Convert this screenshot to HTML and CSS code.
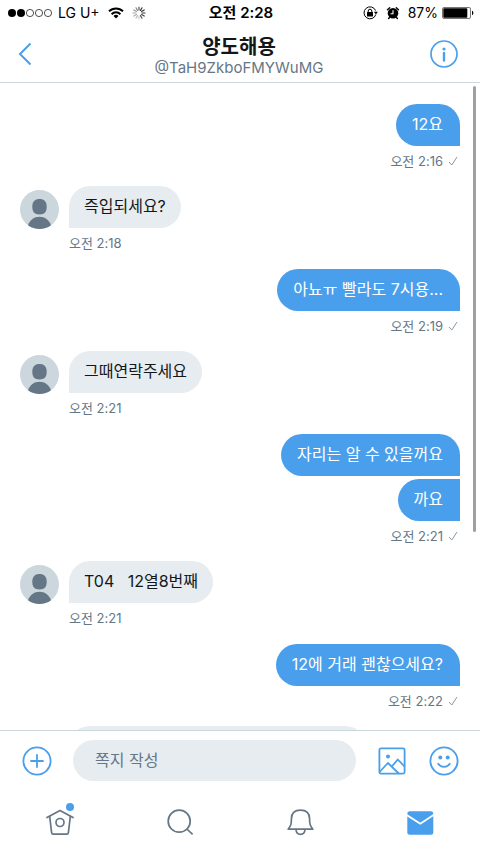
FILE: index.html
```
<!DOCTYPE html>
<html lang="ko">
<head>
<meta charset="utf-8">
<meta name="viewport" content="width=device-width, initial-scale=1">
<title>양도해용</title>
<link rel="stylesheet" href="styles.css">
</head>
<body>
<svg class="sprite" aria-hidden="true">
  <symbol id="avatar" viewBox="0 0 39 39">
    <circle cx="19.500" cy="19.500" r="19.500" fill="#ccd6dd"/>
    <path d="M19.500 9c4.500 0 7.200 2.500 7.200 7.500 0 5.200-1.800 8-7.200 8s-7.200-2.800-7.200-8c0-5 2.700-7.500 7.200-7.500z" fill="#657786"/>
    <path d="M8 35.200C10 30 14 26.800 19.500 26.800S29 30 31 35.200A19.500 19.500 0 0 1 8 35.200z" fill="#657786"/>
  </symbol>
  <symbol id="check" viewBox="0 0 10 10">
    <path d="M1 6l2.800 3L9 1" fill="none" stroke="#8899a6" stroke-width="1"/>
  </symbol>
</svg>

<div class="status">
  <div class="status-left">
    <svg width="44" height="10" viewBox="0 0 44 10" aria-hidden="true">
      <circle cx="4" cy="5" r="4"/><circle cx="13" cy="5" r="4"/>
      <g fill="none" stroke="#222" stroke-width=".8"><circle cx="22" cy="5" r="3.600"/><circle cx="31" cy="5" r="3.600"/><circle cx="40" cy="5" r="3.600"/></g>
    </svg>
    <span>LG U+</span>
    <svg class="wifi" width="16" height="12" viewBox="0 0 16 12" aria-hidden="true">
      <g fill="none" stroke="#000" stroke-width="2"><path d="M1 4.300a10 10 0 0 1 14 0"/><path d="M3.600 7.200a6.200 6.200 0 0 1 8.800 0"/></g>
      <path d="M8 11.600L5.500 9a3.600 3.600 0 0 1 5 0z"/>
    </svg>
    <svg class="spinner" width="14" height="14" viewBox="0 0 14 14" aria-hidden="true">
      <g stroke-width="1.200" stroke-linecap="round">
        <path d="M7 1v3" stroke="#555"/><path d="M10 1.800L8.500 4.400" stroke="#333"/><path d="M12.200 4L9.600 5.500" stroke="#333"/><path d="M13 7h-3" stroke="#333"/><path d="M12.200 10L9.600 8.500" stroke="#444"/><path d="M10 12.200L8.500 9.600" stroke="#555"/><path d="M7 13v-3" stroke="#ccc"/><path d="M4 12.200l1.500-2.600" stroke="#bbb"/><path d="M1.800 10l2.600-1.500" stroke="#aaa"/><path d="M1 7h3" stroke="#aaa"/><path d="M1.800 4l2.600 1.500" stroke="#999"/><path d="M4 1.800l1.500 2.600" stroke="#888"/>
      </g>
    </svg>
  </div>
  <time class="clock">오전 2:28</time>
  <div class="status-right">
    <svg width="15" height="14" viewBox="0 0 15 14" aria-hidden="true">
      <path d="M12.600 4.600A6 6 0 1 0 12.800 8.500" fill="none" stroke="#000" stroke-width="1"/>
      <path d="M10.900 5.800h4l-2 2.600z"/>
      <rect x="4" y="6" width="6" height="4.500" rx=".5"/>
      <path d="M5.200 6.500V5a1.800 1.800 0 0 1 3.600 0v1.500" fill="none" stroke="#000"/>
    </svg>
    <svg width="14" height="14" viewBox="0 0 14 14" aria-hidden="true">
      <circle cx="7" cy="7.300" r="5.300"/>
      <path d="M1.500 3.700l2.200-2M12.500 3.700l-2.200-2M3.500 11.500l-.9 1M10.500 11.500l.9 1" stroke="#000" stroke-width="1.400" stroke-linecap="round"/>
      <path d="M7 4.200v3.500H4.500" fill="none" stroke="#fff" stroke-width="1.100"/>
    </svg>
    <span>87%</span>
    <svg class="battery" width="32" height="12" viewBox="0 0 32 12" aria-hidden="true">
      <rect x=".5" y=".5" width="28" height="11" rx="1.500" fill="none" stroke="#777"/>
      <rect x="1.300" y="1.300" width="24" height="9.400" rx=".8"/>
      <path d="M30 3.800c1.800 .4 1.800 4 0 4.400z"/>
    </svg>
  </div>
</div>

<header class="header">
  <button class="icon-button" aria-label="뒤로">
    <svg width="14" height="24" viewBox="0 0 14 24"><path d="M12.500 1.500L2 12l10.500 10.500" fill="none" stroke="#4a9fec" stroke-width="2"/></svg>
  </button>
  <div class="heading">
    <h1>양도해용</h1>
    <p>@TaH9ZkboFMYWuMG</p>
  </div>
  <button class="icon-button info" aria-label="정보">
    <svg width="28" height="28" viewBox="0 0 28 28"><circle cx="14" cy="14" r="13" fill="none" stroke="#4a9fec" stroke-width="1.700"/><circle cx="14" cy="9" r="1.600" fill="#4a9fec"/><path d="M14 13v7.500" stroke="#4a9fec" stroke-width="2.400" stroke-linecap="round"/></svg>
  </button>
</header>

<main class="messages">
  <section class="sent">
    <p class="bubble">12요</p>
    <div class="meta"><time>오전 2:16</time><svg width="10" height="10"><use href="#check"/></svg></div>
  </section>
  <section class="received">
    <svg class="avatar" width="39" height="39"><use href="#avatar"/></svg>
    <div>
      <p class="bubble">즉입되세요?</p>
      <div class="meta"><time>오전 2:18</time></div>
    </div>
  </section>
  <section class="sent">
    <p class="bubble">아뇨ㅠ 빨라도 7시용...</p>
    <div class="meta"><time>오전 2:19</time><svg width="10" height="10"><use href="#check"/></svg></div>
  </section>
  <section class="received">
    <svg class="avatar" width="39" height="39"><use href="#avatar"/></svg>
    <div>
      <p class="bubble">그때연락주세요</p>
      <div class="meta"><time>오전 2:21</time></div>
    </div>
  </section>
  <section class="sent">
    <p class="bubble">자리는 알 수 있을꺼요</p>
    <p class="bubble">까요</p>
    <div class="meta"><time>오전 2:21</time><svg width="10" height="10"><use href="#check"/></svg></div>
  </section>
  <section class="received">
    <svg class="avatar" width="39" height="39"><use href="#avatar"/></svg>
    <div>
      <p class="bubble">T04   12열8번째</p>
      <div class="meta"><time>오전 2:21</time></div>
    </div>
  </section>
  <section class="sent">
    <p class="bubble">12에 거래 괜찮으세요?</p>
    <div class="meta"><time>오전 2:22</time><svg width="10" height="10"><use href="#check"/></svg></div>
  </section>
  <section class="received partial">
    <span></span>
    <div class="bubble"></div>
  </section>
  <div class="scroll-thumb"></div>
</main>

<form class="composer">
  <button type="button" class="icon-button" aria-label="추가">
    <svg width="30" height="30" viewBox="0 0 30 30" fill="none" stroke="#4a9fec" stroke-width="1.800"><circle cx="15" cy="15" r="13.600"/><path d="M15 9v12M9 15h12" stroke-linecap="round"/></svg>
  </button>
  <input type="text" placeholder="쪽지 작성" aria-label="쪽지 작성">
  <button type="button" class="icon-button" aria-label="사진">
    <svg width="28" height="28" viewBox="0 0 28 28" fill="none" stroke="#4a9fec" stroke-width="1.800"><rect x="1.400" y="1.400" width="25.200" height="25.200" rx="1.500"/><circle cx="10" cy="9.500" r="2" fill="#4a9fec" stroke="none"/><path d="M1.500 25L10 16l10.800 10.500M13.800 19.500l6-7 6.700 7"/></svg>
  </button>
  <button type="button" class="icon-button" aria-label="이모티콘">
    <svg width="30" height="30" viewBox="0 0 30 30" fill="none" stroke="#4a9fec" stroke-width="1.800"><circle cx="15" cy="15" r="13.600"/><g fill="#4a9fec" stroke="none"><circle cx="11.300" cy="11.600" r="2"/><circle cx="18.700" cy="11.600" r="2"/></g><path d="M9.200 17.800c2.600 4 9 4 11.600 0" stroke-linecap="round"/></svg>
  </button>
</form>

<nav class="tabs">
  <a href="#" aria-label="홈">
    <svg width="28" height="36" viewBox="0 0 28 36"><g fill="none" stroke="#657786" stroke-width="1.700" stroke-linejoin="round" stroke-linecap="round"><path d="M1 17.500L14 10.500l13 7"/><path d="M3.700 16.500l1.900 16.200q.2 1.500 1.700 1.500h13.400q1.500 0 1.700-1.500l1.900-16.200"/><circle cx="14" cy="22.500" r="4"/></g><circle cx="24" cy="7" r="4" fill="#4a9fec"/></svg>
  </a>
  <a href="#" aria-label="검색">
    <svg width="28" height="36" viewBox="0 0 28 36"><g fill="none" stroke="#657786" stroke-width="1.700"><circle cx="13.200" cy="21.200" r="11"/><path d="M20.800 29l5.800 5.400"/></g></svg>
  </a>
  <a href="#" aria-label="알림">
    <svg width="28" height="36" viewBox="0 0 28 36"><g fill="none" stroke="#657786" stroke-width="1.700" stroke-linejoin="round"><path d="M2.200 29.200c3-4 3.200-5.500 3.200-10.200C5.400 13.200 9 10.200 14.500 10.200s9.100 3 9.100 8.800c0 4.700.2 6.200 3.200 10.200z"/><path d="M10 29.500c.4 6.500 8.600 6.500 9 0"/></g></svg>
  </a>
  <a href="#" aria-label="쪽지" aria-current="page">
    <svg width="28" height="36" viewBox="0 0 28 36"><rect x="1.300" y="11.300" width="26" height="23.400" rx="2.500" fill="#4a9fec"/><path d="M0 14.600l14.300 9.200 14-9.200" fill="none" stroke="#fff" stroke-width="1.800"/></svg>
  </a>
</nav>
</body>
</html>
```
FILE: styles.css
```
* {
  box-sizing: border-box;
}

body {
  margin: 0;
  height: 100vh;
  display: flex;
  flex-direction: column;
  background: #fff;
  color: #14171a;
  font-family: Inter, "Noto Sans CJK KR", sans-serif;
  font-size: 16px;
}

h1,
p {
  margin: 0;
}

svg {
  display: block;
  flex: none;
}

.sprite {
  position: absolute;
  width: 0;
  height: 0;
}

.status {
  display: grid;
  grid-template-columns: 1fr auto 1fr;
  align-items: center;
  height: 26px;
  padding: 0 6px 0 8px;
  color: #000;
  font-size: 14px;
  line-height: 26px;
}

.status-left,
.status-right {
  display: flex;
  align-items: center;
  gap: 8px;
}

.status-left {
  gap: 6px;
}

.status-right {
  justify-content: flex-end;
}

.wifi,
.spinner {
  margin-left: 2px;
}

.battery {
  margin-left: -4px;
}

.clock {
  font-size: 15px;
  font-weight: 600;
}

.header {
  display: flex;
  align-items: center;
  height: 57px;
  padding: 0 20px 0 18px;
  border-bottom: 1px solid #ccd6dd;
}

.icon-button {
  display: flex;
  align-items: center;
  justify-content: center;
  flex: none;
  width: 32px;
  height: 32px;
  padding: 0;
  border: 0;
  background: none;
}

.header .icon-button {
  justify-content: flex-start;
}

.header .info {
  justify-content: center;
}

.heading {
  flex: 1;
  padding-top: 4px;
  text-align: center;
}

.heading h1 {
  font-size: 20px;
  line-height: 24px;
  font-weight: 700;
}

.heading p {
  color: #657786;
  font-size: 15px;
  line-height: 18px;
}

.messages {
  position: relative;
  flex: 1;
  min-height: 0;
  overflow: hidden;
  padding: 21px 20px 0;
}

.sent {
  display: flex;
  flex-direction: column;
  align-items: flex-end;
  gap: 3px;
  margin-bottom: 10px;
}

.received {
  display: grid;
  grid-template-columns: 39px 1fr;
  gap: 10px;
  margin-bottom: 11px;
}

.avatar {
  margin-top: 4px;
}

.bubble {
  width: fit-content;
  min-height: 42px;
  padding: 0 16px 2px;
  border-radius: 21px;
  line-height: 40px;
  white-space: pre-wrap;
}

.sent .bubble {
  padding-right: 17px;
  background: #4a9fec;
  color: #fff;
  border-bottom-right-radius: 0;
}

.sent .bubble + .bubble {
  border-top-right-radius: 0;
}

.received .bubble {
  padding-left: 15px;
  padding-right: 15px;
  background: #e6ecf0;
  border-bottom-left-radius: 0;
}

.partial .bubble {
  width: 76%;
}

.meta {
  display: flex;
  align-items: center;
  gap: 5px;
  color: #657786;
  font-size: 13px;
  line-height: 30px;
}

.sent .meta {
  margin-top: -3px;
  padding-right: 2px;
}

.scroll-thumb {
  position: absolute;
  top: 3px;
  right: 4px;
  width: 3px;
  height: 69%;
  border-radius: 2px;
  background: #a0a0a0;
}

.composer {
  display: flex;
  align-items: center;
  gap: 20px;
  height: 60px;
  padding: 0 20px 0 21px;
  border-top: 1px solid #ccd6dd;
}

.composer input {
  flex: 1;
  min-width: 0;
  height: 41px;
  padding: 0 22px 2px;
  border: 0;
  border-radius: 21px;
  background: #e6ecf0;
  color: #14171a;
  font: inherit;
}

.composer input::placeholder {
  color: #657786;
  opacity: 1;
}

.tabs {
  display: grid;
  grid-template-columns: repeat(4, 1fr);
  height: 64px;
}

.tabs a {
  display: flex;
  justify-content: center;
  padding-top: 10px;
}
```
